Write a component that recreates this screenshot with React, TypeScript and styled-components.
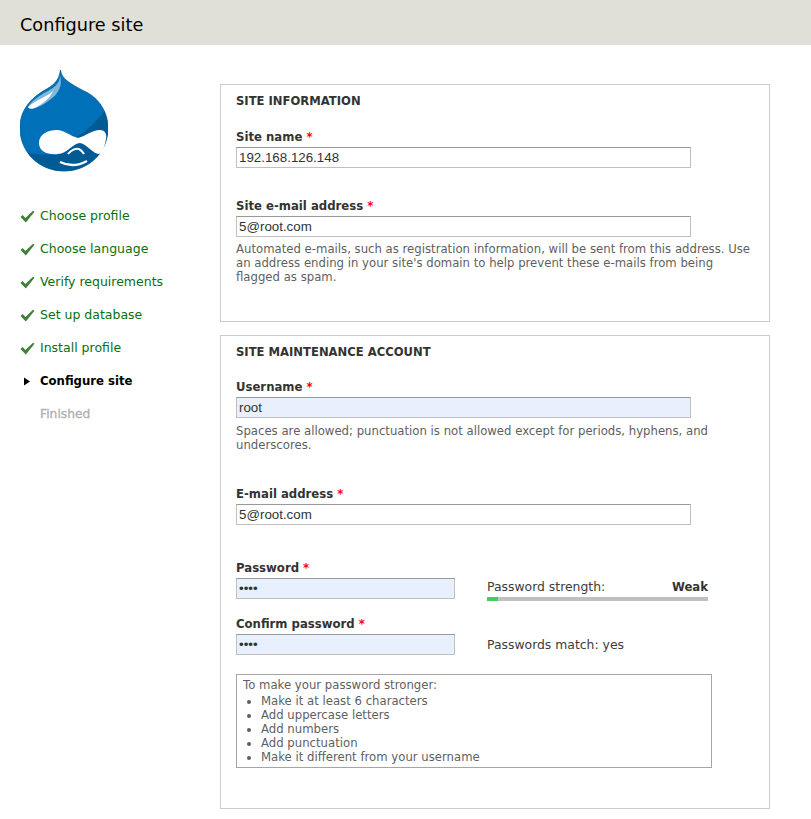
import React from "react";
import styled, { createGlobalStyle } from "styled-components";

const Global = createGlobalStyle`
  html, body { margin: 0; padding: 0; background: #fff; overflow: hidden; }
  body { font-family: "DejaVu Sans", Verdana, sans-serif; font-size: 12px; color: #3b3b3b; }
`;
const Page = styled.div`width: 811px; height: 819px; overflow: hidden;`;
const Header = styled.header`
  height: 45px; background: #e0e0d8; padding: 0 20px; display: flex; align-items: center;
`;
const Title = styled.h1`margin: 0; font-size: 17.7px; font-weight: 400; color: #000; line-height: 26px; padding-top: 4px;`;
const Body = styled.div`display: flex; align-items: flex-start;`;
const Sidebar = styled.aside`width: 220px; flex: none; padding: 25px 0 0 20px; box-sizing: border-box;`;
const Logo = styled.svg`display: block; width: 88px; height: 102px;`;
const Steps = styled.ol`list-style: none; margin: 27px 0 0; padding: 0;`;
const Step = styled.li<{ $state: "done" | "active" | "todo" }>`
  height: 33px; display: flex; align-items: center; line-height: 16px;
  font-size: ${p => p.$state === "active" ? "11.7px" : p.$state === "todo" ? "12.3px" : "12.5px"};
  color: ${p => p.$state === "done" ? "#0a700a" : p.$state === "active" ? "#000" : "#b0aeb0"};
  font-weight: ${p => p.$state === "active" ? 700 : 400};
  -webkit-text-stroke: ${p => p.$state === "todo" ? "0.3px #b0aeb0" : "0"};
`;
const StepMark = styled.span`width: 20px; flex: none; display: flex; align-items: center; justify-content: flex-start; padding-top: 2px;`;
const Main = styled.main`width: 550px; padding-top: 39px; flex: none;`;
const Fieldset = styled.section<{ $h: number }>`
  box-sizing: border-box; height: ${p => p.$h}px; margin-bottom: 13px; border: 1px solid #cccccc; padding: 9px 15px 0;
`;
const Legend = styled.h2`margin: 0; font-size: 11.6px; line-height: 15px; font-weight: 700; color: #333; text-transform: uppercase;`;
const Field = styled.div<{ $mt: number }>`margin-top: ${p => p.$mt}px;`;
const Label = styled.label`display: block; font-size: 11.7px; line-height: 16px; font-weight: 700; color: #333; margin-bottom: 2px;`;
const Req = styled.span`color: #f00; font-weight: 700;`;
const Input = styled.input<{ $w: number; $auto?: boolean }>`
  display: block; box-sizing: border-box; width: ${p => p.$w}px; height: 21px; padding: 0 2px; margin: 0;
  font-family: "Liberation Sans", Arial, sans-serif; font-size: 13.33px; color: #333;
  background: ${p => p.$auto ? "#e8f0fe" : "#fff"};
  border: 1px solid #c0c0c0; border-top-color: #999; outline: none;
`;
const Help = styled.div<{ $mt: number }>`margin-top: ${p => p.$mt}px; font-size: 11.7px; line-height: 14px; color: #5f5f5f; width: 520px;`;
const PassRow = styled.div<{ $mt: number }>`display: flex; margin-top: ${p => p.$mt}px;`;
const PassCol = styled.div`width: 251px; flex: none;`;
const Meter = styled.div`width: 221px; padding-top: 19px;`;
const MeterTop = styled.div`display: flex; justify-content: space-between; align-items: baseline; font-size: 12.4px; line-height: 15px; color: #3b3b3b;`;
const MeterValue = styled.strong`font-size: 11.7px; color: #333;`;
const Bar = styled.div`height: 4px; margin-top: 2px; background: #c0c0c0;`;
const BarFill = styled.div`height: 100%; background: #47c965;`;
const Match = styled.div`padding-top: 21px; font-size: 12.4px; line-height: 15px; color: #3b3b3b;`;
const Tips = styled.div`
  box-sizing: border-box; margin-top: 19px; width: 476px; height: 94px; border: 1px solid #a5a5a5;
  padding: 3px 6px; font-size: 11.7px; line-height: 14px; color: #5f5f5f;
`;
const TipList = styled.ul`margin: 2px 0 0; padding: 0 0 0 18px;`;

const Check = () => (
  <svg width="15" height="13" viewBox="0 0 15 13"><path d="M0.5 7 L2.6 5 L5.4 8 L13 0.8 L14.5 1.8 L5.8 12.6 Z" fill="#3f7f3a" /></svg>
);
const Arrow = () => (
  <svg width="15" height="9" viewBox="0 0 15 9"><path d="M4 0.5 L10 4.5 L4 8.5 Z" fill="#000" /></svg>
);
const dropD = "M40.5 0 C41 5 44 9 50 13 C56 17 62 20 68 23 C80 30 88 43 88 58 C88 82 69 101 44 101 C19 101 0 82 0 58 C0 40 11 28 25 20 C32 16 39 12 40.5 0 Z";
const DrupalLogo = () => (
  <Logo viewBox="0 0 88 102">
    <defs>
      <clipPath id="drop"><path d={dropD} /></clipPath>
    </defs>
    <g clipPath="url(#drop)">
      <rect width="88" height="102" fill="#0071b8" />
      <path d="M88 36 C84 42 80 47 76 51 C70 58 62 63 55 68 L38 84 C26 85 10 85 0 80 L0 102 L88 102 Z" fill="#005a93" />
      <path d="M40 5 C40 14 34 18 24 23 C16 28 9 33 8 38 C14 40 24 35 31 29 C38 24 43 16 40 5 Z" fill="#fff" opacity="0.5" />
      <path d="M33 21 C28 26 16 30 8 37 C9 39 12 39 15 38 C22 34 30 29 33 21 Z" fill="#fff" />
    </g>
    <path d={dropD} fill="none" stroke="#005a93" strokeWidth="0.8" />
    <path d="M19 73 C19 64 28 60 37 60 C44 60 50 66 58 68 C66 66 72 60 80 60 C85 60 87 64 86 69 C85 75 83 83 79 84 C73 84 67 74 60 73 C53 73 47 84 38 84 C28 85 19 82 19 73 Z" fill="#fff" />
    <path d="M48 84 C51 80 56 78 59 79 C61 80 63 82 64 84" fill="none" stroke="#fff" strokeWidth="2" />
    <path d="M40 92 C48 96 58 96 67 91" fill="none" stroke="#fff" strokeWidth="2.4" />
  </Logo>
);

const steps: [string, "done" | "active" | "todo"][] = [
  ["Choose profile", "done"], ["Choose language", "done"], ["Verify requirements", "done"],
  ["Set up database", "done"], ["Install profile", "done"], ["Configure site", "active"], ["Finished", "todo"],
];

export default function App() {
  return (
    <Page>
      <Global />
      <Header><Title>Configure site</Title></Header>
      <Body>
        <Sidebar>
          <DrupalLogo />
          <Steps>
            {steps.map(([t, s]) => (
              <Step key={t} $state={s}>
                <StepMark>{s === "done" ? <Check /> : s === "active" ? <Arrow /> : null}</StepMark>
                {t}
              </Step>
            ))}
          </Steps>
        </Sidebar>
        <Main>
          <Fieldset $h={238}>
            <Legend>Site information</Legend>
            <Field $mt={20}>
              <Label>Site name <Req>*</Req></Label>
              <Input $w={455} readOnly value="192.168.126.148" />
            </Field>
            <Field $mt={30}>
              <Label>Site e-mail address <Req>*</Req></Label>
              <Input $w={455} readOnly value="5@root.com" />
              <Help $mt={5}>Automated e-mails, such as registration information, will be sent from this address. Use an address ending in your site's domain to help prevent these e-mails from being flagged as spam.</Help>
            </Field>
          </Fieldset>
          <Fieldset $h={474}>
            <Legend>Site maintenance account</Legend>
            <Field $mt={19}>
              <Label>Username <Req>*</Req></Label>
              <Input $w={455} $auto readOnly value="root" />
              <Help $mt={6}>Spaces are allowed; punctuation is not allowed except for periods, hyphens, and underscores.</Help>
            </Field>
            <Field $mt={34}>
              <Label>E-mail address <Req>*</Req></Label>
              <Input $w={455} readOnly value="5@root.com" />
            </Field>
            <PassRow $mt={35}>
              <PassCol>
                <Label>Password <Req>*</Req></Label>
                <Input $w={219} $auto readOnly type="password" value="root" />
              </PassCol>
              <Meter>
                <MeterTop><span>Password strength:</span><MeterValue>Weak</MeterValue></MeterTop>
                <Bar><BarFill style={{ width: "5%" }} /></Bar>
              </Meter>
            </PassRow>
            <PassRow $mt={15}>
              <PassCol>
                <Label>Confirm password <Req>*</Req></Label>
                <Input $w={219} $auto readOnly type="password" value="root" />
              </PassCol>
              <Match>Passwords match: yes</Match>
            </PassRow>
            <Tips>
              To make your password stronger:
              <TipList>
                <li>Make it at least 6 characters</li>
                <li>Add uppercase letters</li>
                <li>Add numbers</li>
                <li>Add punctuation</li>
                <li>Make it different from your username</li>
              </TipList>
            </Tips>
          </Fieldset>
        </Main>
      </Body>
    </Page>
  );
}
